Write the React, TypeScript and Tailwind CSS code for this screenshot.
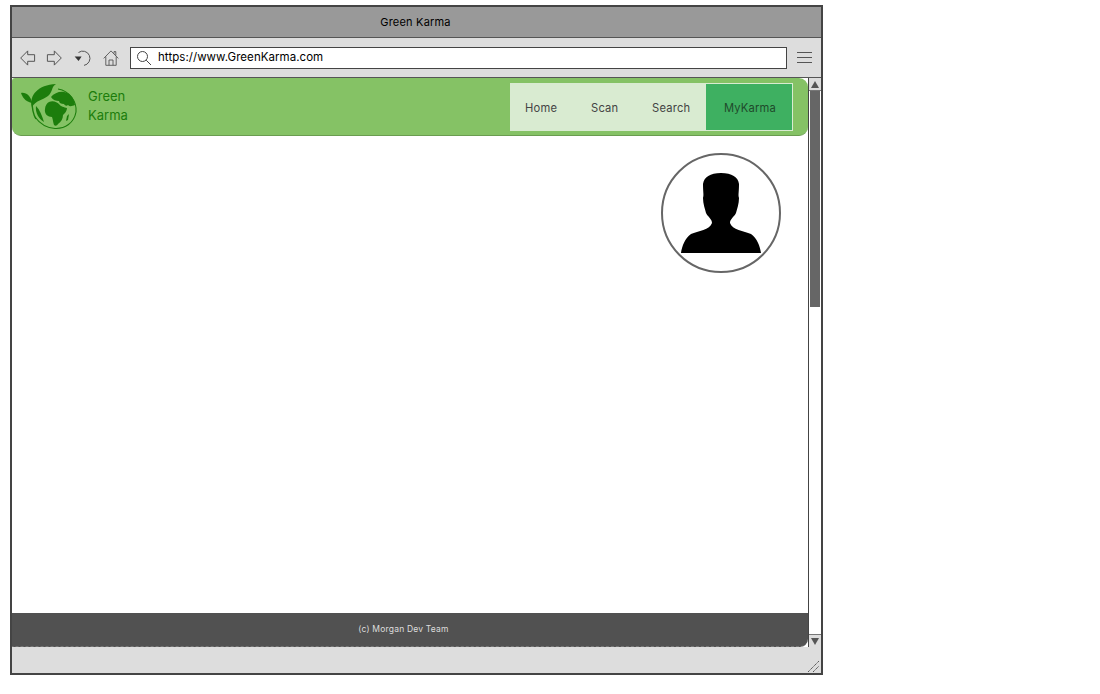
import React from "react";

const font = { fontFamily: "Inter, 'Liberation Sans', sans-serif" };

// Toolbar icons from the wireframe browser chrome
function BackIcon() {
  return (
    <svg width="16" height="16" viewBox="0 0 16 16" fill="none" stroke="#555" strokeWidth="1">
      <path d="M0.7 8 L7.7 0.9 V4.7 H14.6 V11.3 H7.7 V15.1 Z" />
    </svg>
  );
}

function ForwardIcon() {
  return (
    <svg width="16" height="16" viewBox="0 0 16 16" fill="none" stroke="#555" strokeWidth="1">
      <path d="M15.3 8 L8.3 0.9 V4.7 H1.4 V11.3 H8.3 V15.1 Z" />
    </svg>
  );
}

function ReloadIcon() {
  return (
    <svg width="19" height="18" viewBox="0 0 19 18" fill="none">
      <path d="M4.5 3.5 A7.2 7.2 0 1 1 10 16.4" stroke="#555" strokeWidth="1" />
      <path d="M0.6 7.6 H7.6 L4.6 12 Z" fill="#333" />
    </svg>
  );
}

function HomeIcon() {
  return (
    <svg width="16" height="16" viewBox="0 0 16 16" fill="none" stroke="#555" strokeWidth="0.9">
      <path d="M0.7 8.4 L8 0.9 L15.3 8.4" />
      <path d="M2.8 6.6 V15.3 H13.2 V6.6" />
      <path d="M6 15.3 V10 H10 V15.3" />
      <path d="M11 3.6 V1.6 H12.8 V5.6" />
    </svg>
  );
}

function SearchIcon() {
  return (
    <svg width="16" height="16" viewBox="0 0 16 16" fill="none" stroke="#444" strokeWidth="1">
      <circle cx="6.5" cy="6.5" r="5" />
      <path d="M10.2 10.2 L15 15" />
    </svg>
  );
}

function Logo() {
  return (
    <svg width="58" height="48" viewBox="0 0 58 48" fill="#1c7d0c">
      {/* big leaf */}
      <path d="M12 24 C9 12 18 2 36 1 C31 4 33 9 28 13 C23 17 16 17 12 24 Z" />
      {/* small leaf */}
      <path d="M1 10 C6 9 11 13 12 20 C7 19 3 16 1 10 Z" />
      {/* stem and lower leaf */}
      <path d="M12 18 C12 24 13 31 16 36" fill="none" stroke="#1c7d0c" strokeWidth="1.4" />
      <path d="M16 23 C20 27 22 33 24 39 C19 36 15 30 16 23 Z" />
      {/* ring */}
      <path d="M38 6 C50 8 57 19 56 29 C54 40 45 46 35 45.5 C27 45 20 41 15 34" fill="none" stroke="#1c7d0c" strokeWidth="1.1" />
      {/* europe and asia */}
      <path d="M31 14 C34 10 40 8 44 9 C50 10 54 15 55 22 C52 23 50 24 48 22 C47 23 45 23 44 21 C41 21 39 20 39 18 C36 18 33 17 31 14 Z" />
      {/* africa */}
      <path d="M29 19 C33 17 37 19 39 21 C41 24 44 24 47 25 C47 28 45 30 43 32 C43 36 41 39 38 41 C37 43 35 43 34 42 C33 39 33 37 32 34 C28 34 24 31 25 26 C25 23 27 20 29 19 Z" />
      {/* madagascar */}
      <path d="M47 33 L49 31 L48 37 L46 38 Z" />
    </svg>
  );
}

function Silhouette() {
  return (
    <svg width="82" height="82" viewBox="0 0 82 82" fill="#000">
      <path d="M1 81 C2 74 5 66 11 62 C18 59 30 58 32 51 C32 47 28 45 26 41 C25 37 23 32 23 26 C24 23 23 20 23 12 C24 5 30 1 41 1 C52 1 58 5 59 12 C59 20 58 23 59 26 C59 32 57 37 56 41 C54 45 50 47 50 51 C52 58 64 59 71 62 C77 66 80 74 81 81 Z" />
    </svg>
  );
}

const links = ["Home", "Scan", "Search"];

export default function App() {
  return (
    <div className="w-[1100px] h-[694px] bg-white pt-[5px] pl-[10px]" style={font}>
      <div className="w-[813px] h-[670px] border-2 border-[#444] flex flex-col">
        {/* title bar */}
        <div className="h-[31px] shrink-0 bg-[#999] border-b border-[#555] flex items-center justify-center text-[11px] text-black tracking-[0.2px] pr-[2px]">
          Green Karma
        </div>

        {/* toolbar */}
        <div className="h-[40px] shrink-0 bg-[#ddd] border-b border-[#555] flex items-center pl-[8px] pr-[9px]">
          <BackIcon />
          <span className="ml-[10px]"><ForwardIcon /></span>
          <span className="ml-[12px]"><ReloadIcon /></span>
          <span className="ml-[10px]"><HomeIcon /></span>
          <div className="ml-[11px] w-[657px] h-[22px] bg-white border border-[#444] flex items-center pl-[5px] gap-[6px] text-[11.5px] text-black tracking-[0.05px]">
            <SearchIcon />
            <span>https://www.GreenKarma.com</span>
          </div>
          <div className="ml-[10px] w-[15px] flex flex-col gap-[4px]">
            <div className="h-px bg-[#555]" />
            <div className="h-px bg-[#555]" />
            <div className="h-px bg-[#555]" />
          </div>
        </div>

        {/* page */}
        <div className="flex-1 flex min-h-0">
          <div className="w-[796px] flex flex-col">
            <div className="h-[58px] shrink-0 bg-[#85c265] border-b border-[#6a9c50] rounded-b-[9px] rounded-tr-[9px] rounded-tl-[3px] flex items-center pl-[8px] pr-[15px]">
              <Logo />
              <div className="ml-[10px] mb-[2px] text-[13px] leading-[19px] text-[#1c7d0c]">
                <div>Green</div>
                <div>Karma</div>
              </div>
              <div className="ml-auto h-[48px] w-[283px] bg-[#d9ebd1] flex items-center text-[11.2px] text-[#444] tracking-[0.2px]">
                <div className="w-[62px] pl-[15px] pt-[4px]">{links[0]}</div>
                <div className="w-[62px] pl-[19px] pt-[4px]">{links[1]}</div>
                <div className="w-[71px] pl-[18px] pt-[4px]">{links[2]}</div>
                <div className="h-full flex-1 bg-[#3eb061] border border-[#d9ebd1] flex items-center justify-center pt-[4px] pl-[2px] text-[#1f4a2b]">
                  MyKarma
                </div>
              </div>
            </div>

            <div className="flex-1 flex justify-end items-start pt-[17px] pr-[27px]">
              <div className="w-[120px] h-[120px] rounded-full border-2 border-[#666] flex items-end justify-center pb-[17px]">
                <Silhouette />
              </div>
            </div>

            <div className="h-[34px] shrink-0 bg-[#515151] border-b border-dashed border-[#777] rounded-br-[8px] flex items-center justify-center text-[8.5px] text-[#ddd] tracking-[0.2px] pr-[13px]">
              (c) Morgan Dev Team
            </div>
          </div>

          {/* scrollbar */}
          <div className="w-[13px] border-l border-[#444] flex flex-col">
            <div className="h-[13px] bg-[#ddd] border-b border-[#777] flex items-center justify-center">
              <div className="w-0 h-0 border-x-[4px] border-x-transparent border-b-[7px] border-b-[#555]" />
            </div>
            <div className="flex-1 px-px">
              <div className="h-[216px] bg-[#666]" />
            </div>
            <div className="h-[13px] bg-[#ddd] border-t border-[#777] flex items-center justify-center">
              <div className="w-0 h-0 border-x-[4px] border-x-transparent border-t-[7px] border-t-[#555]" />
            </div>
          </div>
        </div>

        {/* status bar */}
        <div className="h-[26px] shrink-0 bg-[#ddd] flex items-end justify-end">
          <svg width="14" height="14" viewBox="0 0 14 14" stroke="#555" strokeWidth="1" strokeDasharray="1.5 0.5">
            <path d="M1 13 L12 2" />
            <path d="M6 13 L12 7" />
          </svg>
        </div>
      </div>
    </div>
  );
}
